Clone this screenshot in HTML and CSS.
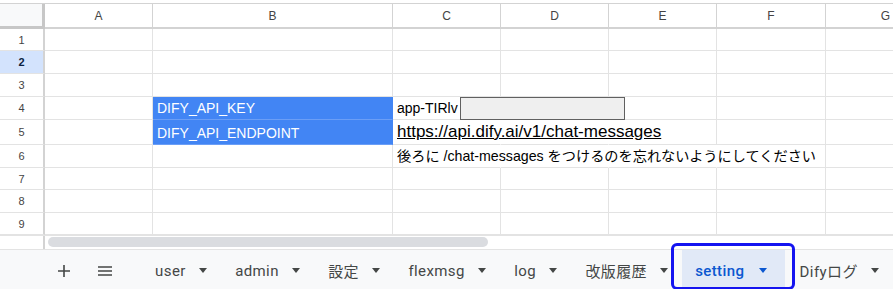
FILE: index.html
```html
<!DOCTYPE html>
<html lang="ja">
<head>
    <meta charset="UTF-8">
    <meta name="viewport" content="width=device-width, initial-scale=1.0">
    <title>setting - Sheets</title>
    <link rel="stylesheet" href="styles.css">
</head>
<body>
    <div class="sheet">
        <div class="grid">
            <div class="corner"></div>
            <div class="colhead">A</div>
            <div class="colhead">B</div>
            <div class="colhead">C</div>
            <div class="colhead">D</div>
            <div class="colhead">E</div>
            <div class="colhead">F</div>
            <div class="colhead">G</div>

            <div class="rowhead">1</div>
            <div class="cell"></div><div class="cell"></div><div class="cell"></div><div class="cell"></div><div class="cell"></div><div class="cell"></div><div class="cell"></div>

            <div class="rowhead active">2</div>
            <div class="cell"></div><div class="cell"></div><div class="cell"></div><div class="cell"></div><div class="cell"></div><div class="cell"></div><div class="cell"></div>

            <div class="rowhead">3</div>
            <div class="cell"></div><div class="cell"></div><div class="cell"></div><div class="cell"></div><div class="cell"></div><div class="cell"></div><div class="cell"></div>

            <div class="rowhead">4</div>
            <div class="cell"></div>
            <div class="cell picked">DIFY_API_KEY</div>
            <div class="cell key">app-TIRlv<span class="redact"></span></div>
            <div class="cell"></div><div class="cell"></div><div class="cell"></div><div class="cell"></div>

            <div class="rowhead">5</div>
            <div class="cell"></div>
            <div class="cell picked">DIFY_API_ENDPOINT</div>
            <div class="cell spill"><a class="link" href="#">https://api.dify.ai/v1/chat-messages</a></div>
            <div class="cell spill"></div><div class="cell"></div><div class="cell"></div><div class="cell"></div>

            <div class="rowhead">6</div>
            <div class="cell"></div>
            <div class="cell"></div>
            <div class="cell spill note">後ろに /chat-messages をつけるのを忘れないようにしてください</div>
            <div class="cell spill"></div><div class="cell spill"></div><div class="cell"></div><div class="cell"></div>

            <div class="rowhead">7</div>
            <div class="cell"></div><div class="cell"></div><div class="cell"></div><div class="cell"></div><div class="cell"></div><div class="cell"></div><div class="cell"></div>

            <div class="rowhead">8</div>
            <div class="cell"></div><div class="cell"></div><div class="cell"></div><div class="cell"></div><div class="cell"></div><div class="cell"></div><div class="cell"></div>

            <div class="rowhead">9</div>
            <div class="cell"></div><div class="cell"></div><div class="cell"></div><div class="cell"></div><div class="cell"></div><div class="cell"></div><div class="cell"></div>
        </div>

        <div class="hscroll">
            <div class="stub"></div>
            <div class="thumb"></div>
        </div>

        <div class="tabbar">
            <button class="tool">
                <svg width="14" height="14" viewBox="0 0 14 14"><path d="M7 1v12M1 7h12" stroke="#444746" stroke-width="1.6"/></svg>
            </button>
            <button class="tool">
                <svg width="16" height="12" viewBox="0 0 16 12"><path d="M1 2h14M1 6h14M1 10h14" stroke="#444746" stroke-width="1.6"/></svg>
            </button>
            <div class="tab">user<span class="caret"></span></div>
            <div class="tab">admin<span class="caret"></span></div>
            <div class="tab">設定<span class="caret"></span></div>
            <div class="tab">flexmsg<span class="caret"></span></div>
            <div class="tab">log<span class="caret"></span></div>
            <div class="tab">改版履歴<span class="caret"></span></div>
            <div class="tab current">setting<span class="caret"></span><span class="mark"></span></div>
            <div class="tab">Difyログ<span class="caret"></span></div>
        </div>
    </div>
</body>
</html>
```

FILE: styles.css
```css
body {
    margin: 0;
    background: #fff;
    font-family: "Liberation Sans", Arial, "Noto Sans CJK JP", sans-serif;
    overflow: hidden;
}

.sheet {
    margin-top: 3px;
    border-top: 1px solid #d3d3d3;
    width: 893px;
    overflow: hidden;
}

.grid {
    display: grid;
    grid-template-columns: 45px 108px 240px 108px 108px 108px 109px 120px;
    grid-template-rows: 25px 22px 23px 23px 23px 25px 23px 22px 23px 22px;
    width: 1000px;
}

.corner {
    background: #f8f9fa;
    border-right: 3px solid #c7c7c7;
    border-bottom: 3px solid #c7c7c7;
}

.colhead {
    display: flex;
    align-items: center;
    justify-content: center;
    font-size: 12px;
    color: #444;
    border-right: 1px solid #d3d3d3;
    border-bottom: 2px solid #d3d3d3;
    box-sizing: border-box;
}

.rowhead {
    display: flex;
    align-items: center;
    justify-content: center;
    font-size: 11px;
    color: #444;
    border-right: 2px solid #d3d3d3;
    border-bottom: 1px solid #e3e3e3;
    box-sizing: border-box;
}

.rowhead.active {
    background: #d3e3fd;
    color: #0b1f3f;
    font-weight: bold;
}

.cell {
    display: flex;
    align-items: flex-end;
    padding: 0 4px 2px 4px;
    font-size: 14px;
    line-height: 18px;
    color: #000;
    white-space: nowrap;
    border-right: 1px solid #e3e3e3;
    border-bottom: 1px solid #e3e3e3;
    box-sizing: border-box;
    min-width: 0;
}

.cell.spill {
    border-right-color: transparent;
}

.cell.note {
    font-size: 14.2px;
}

.cell.picked {
    background: #4285f4;
    color: #fff;
    border-right-color: #4285f4;
    border-bottom-color: #6b9ef6;
}

.key {
    position: relative;
}

.redact {
    position: absolute;
    left: 67px;
    top: 0;
    width: 165px;
    height: 23px;
    background: #efefef;
    border: 1px solid #606060;
    box-sizing: border-box;
}

.link {
    font-size: 17px;
    line-height: 21px;
    color: #000;
    text-decoration: underline;
}

.hscroll {
    display: flex;
    height: 13px;
    border-top: 1px solid #e3e3e3;
    border-bottom: 1px solid #e3e3e3;
}

.stub {
    width: 45px;
    border-right: 2px solid #d3d3d3;
    box-sizing: border-box;
}

.thumb {
    width: 440px;
    height: 10px;
    margin: 1px 0 0 3px;
    background: #dadce0;
    border-radius: 5px;
}

.tabbar {
    display: flex;
    align-items: stretch;
    height: 41px;
    background: #f8f9fa;
    font-family: Roboto, "Noto Sans CJK JP", sans-serif;
    font-size: 15px;
    letter-spacing: 0.4px;
    color: #444746;
}

.tool {
    display: flex;
    align-items: center;
    justify-content: center;
    width: 42px;
    padding: 0;
    border: none;
    background: none;
}

.tool:first-child {
    margin-left: 43px;
}

.tab {
    position: relative;
    display: flex;
    align-items: center;
    padding: 0 14.2px;
    white-space: nowrap;
}

.tab:nth-child(3) {
    margin-left: 15px;
}

.caret {
    width: 0;
    height: 0;
    margin-left: 13px;
    border-left: 4px solid transparent;
    border-right: 4px solid transparent;
    border-top: 5px solid #444746;
}

.tab.current {
    background: #e1e9f7;
    color: #0b57d0;
    font-weight: 500;
    padding: 0 18px 0 13px;
}

.tab.current .caret {
    border-top-color: #0b57d0;
    margin-left: 15px;
}

.mark {
    position: absolute;
    left: -11px;
    right: -10px;
    top: -7px;
    bottom: 1px;
    border: 3px solid #1414f0;
    border-radius: 6px;
}
```
